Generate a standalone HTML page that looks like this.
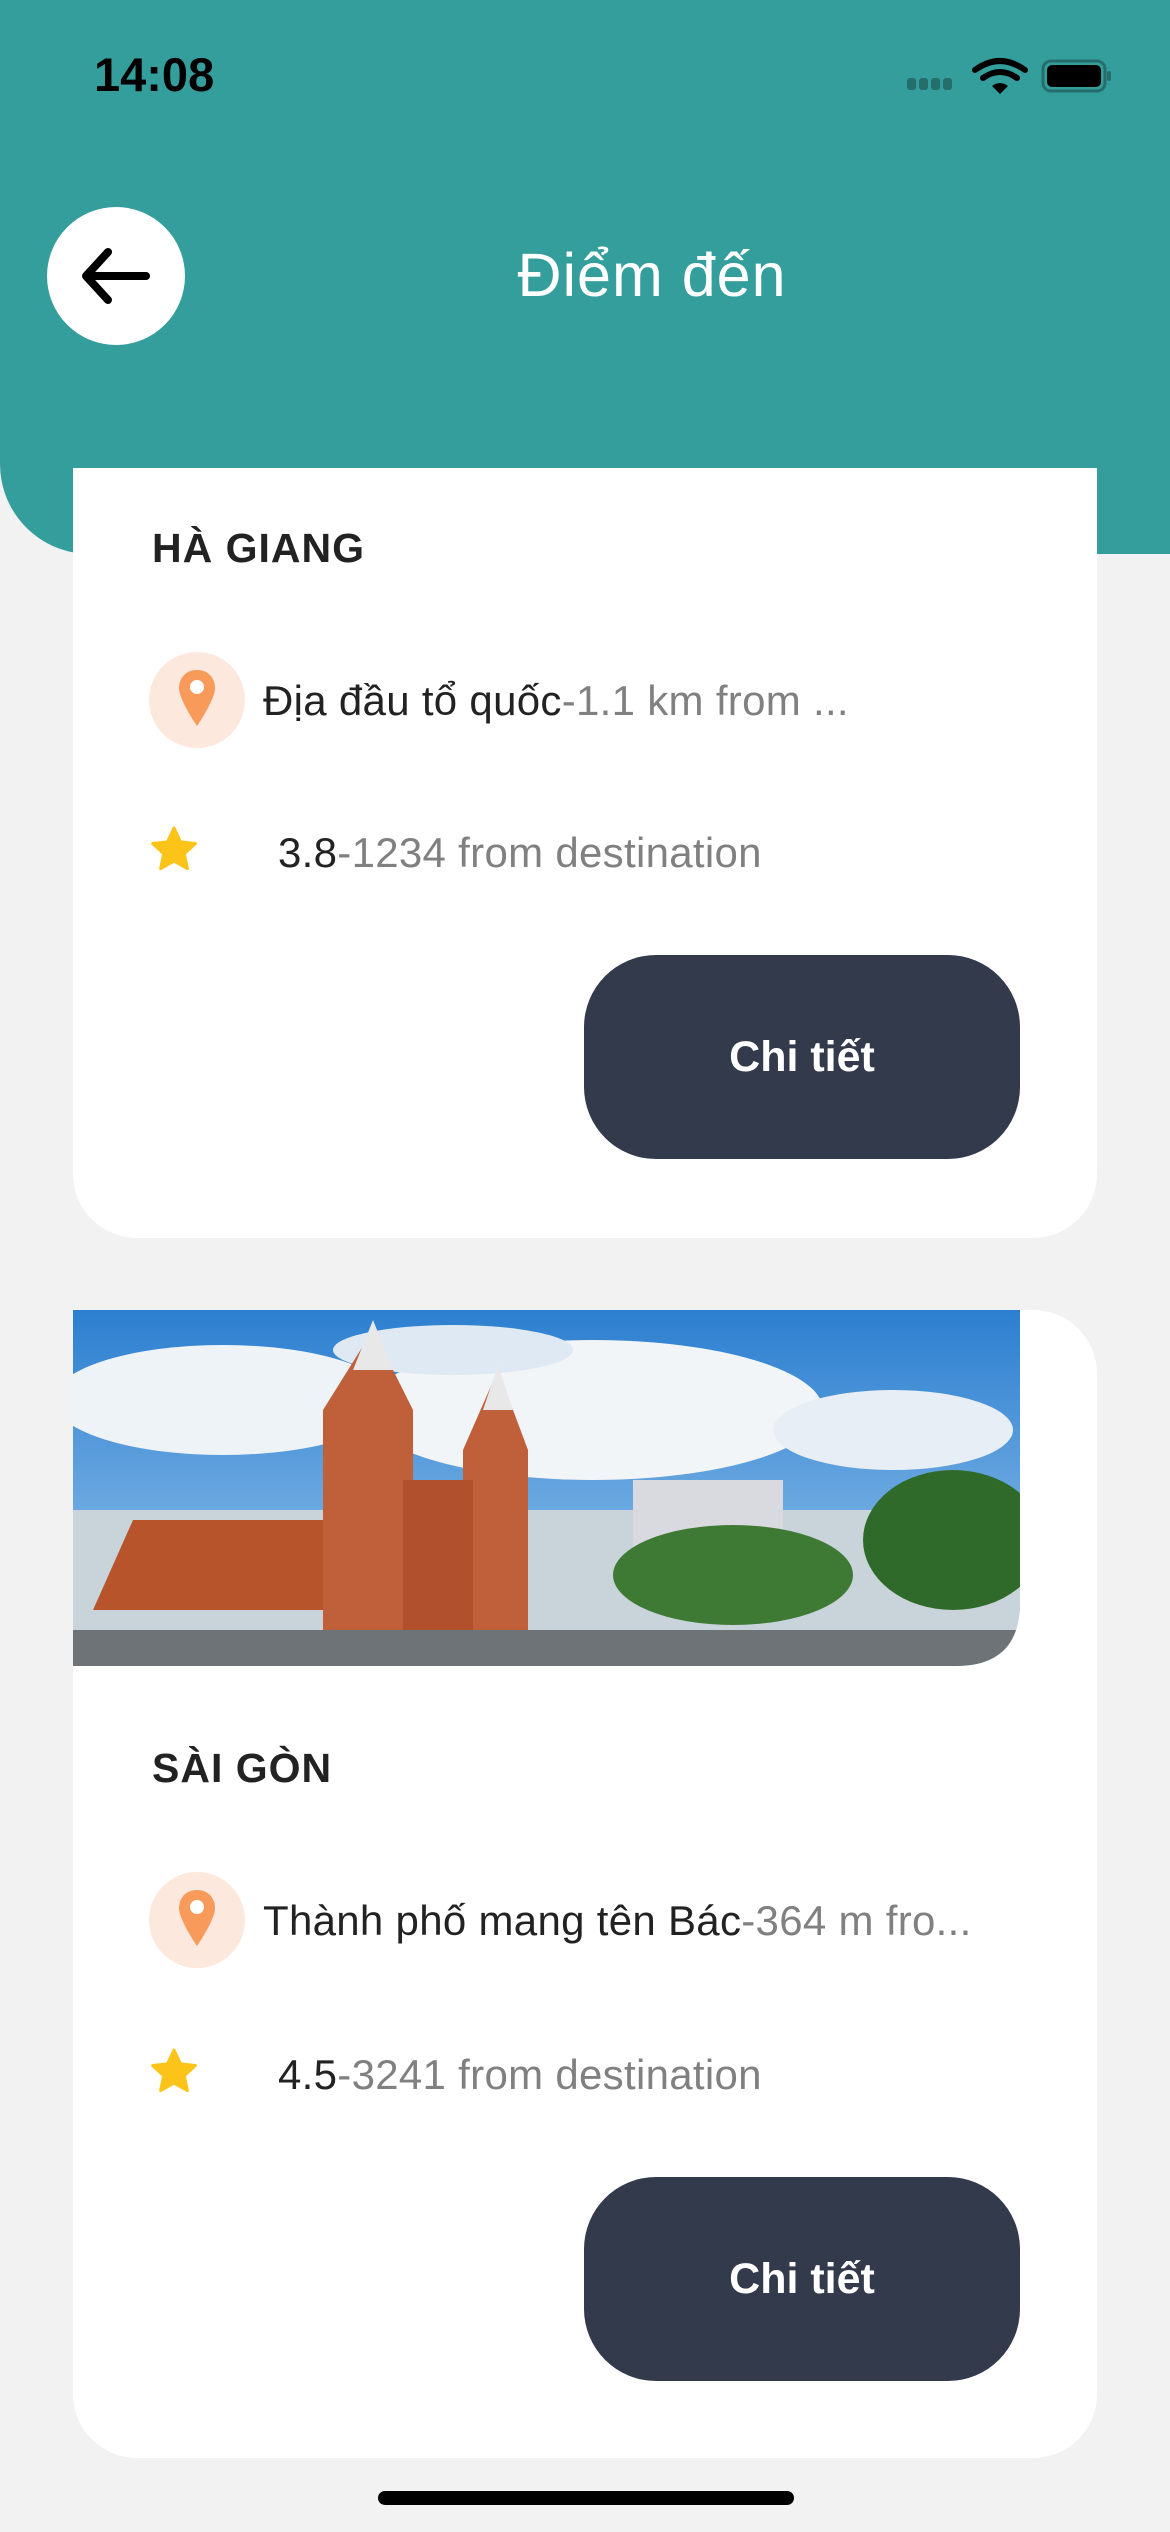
<!DOCTYPE html>
<html><head><meta charset="utf-8"><style>
*{margin:0;padding:0;box-sizing:border-box}
body{width:1170px;height:2532px;background:#f2f2f2;position:relative;overflow:hidden;font-family:"Liberation Sans","DejaVu Sans",sans-serif}
.hdr{position:absolute;left:0;top:0;width:1170px;height:554px;background:#349e9c;border-bottom-left-radius:90px}
.time{position:absolute;left:94px;top:47px;font-size:47px;font-weight:bold;color:#000}
.back{position:absolute;left:47px;top:207px;width:138px;height:138px;border-radius:50%;background:#fff}
.title{position:absolute;left:0;width:1304px;text-align:center;top:240px;font-size:61px;letter-spacing:1px;color:#fff;font-weight:500}
.card{position:absolute;left:73px;width:1024px;background:#fff}
.name{position:absolute;left:79px;font-size:41px;font-weight:bold;color:#222;letter-spacing:1px}
.pin{position:absolute;left:76px;width:96px;height:96px;border-radius:50%;background:#fde8dd}
.row{position:absolute;font-size:42px;color:#222;white-space:nowrap;letter-spacing:0.3px}
.row span{color:#808080}
.star{position:absolute;left:76px}
.btn{position:absolute;left:511px;width:436px;height:204px;border-radius:72px;background:#323a4b;color:#fff;font-size:43px;font-weight:bold;text-align:center;line-height:204px}
.home{position:absolute;left:378px;top:2491px;width:416px;height:14px;border-radius:7px;background:#000}
</style></head><body>
<div class="hdr"></div>
<div class="time">14:08</div>
<svg style="position:absolute;left:905px;top:56px" width="210" height="40" viewBox="0 0 210 40">
<g fill="#256e6c"><rect x="2" y="22" width="9" height="12" rx="3"/><rect x="14" y="22" width="9" height="12" rx="3"/><rect x="26" y="22" width="9" height="12" rx="3"/><rect x="38" y="22" width="9" height="12" rx="3"/></g>
<path d="M70 14 Q95 -4 120 14" stroke="#000" stroke-width="6" fill="none" stroke-linecap="round"/>
<path d="M78 22 Q95 10 112 22" stroke="#000" stroke-width="6" fill="none" stroke-linecap="round"/>
<path d="M87 30 L95 38 L103 30 Q95 24 87 30Z" fill="#000"/>
<rect x="138" y="5" width="62" height="30" rx="8" fill="none" stroke="#256e6c" stroke-width="3"/>
<rect x="142" y="9" width="54" height="22" rx="5" fill="#000"/>
<rect x="202" y="15" width="4" height="10" rx="2" fill="#256e6c"/>
</svg>
<div class="back"></div>
<svg style="position:absolute;left:80px;top:240px" width="72" height="72" viewBox="0 0 72 72">
<path d="M66 36 H8 M28 12 L6 36 L28 60" stroke="#000" stroke-width="8" fill="none" stroke-linecap="round" stroke-linejoin="round"/>
</svg>
<div class="title">Điểm đến</div>

<div class="card" style="top:468px;height:770px;border-radius:0 0 64px 64px">
<div class="name" style="top:57px">HÀ GIANG</div>
<div class="pin" style="top:184px"></div>
<svg style="position:absolute;left:104px;top:200px" width="40" height="64" viewBox="0 0 40 64"><path d="M20 2 C8 2 2 11 2 20 C2 32 20 58 20 58 C20 58 38 32 38 20 C38 11 32 2 20 2Z" fill="#f79a5a"/><circle cx="20" cy="19" r="7" fill="#fff"/></svg>
<div class="row" style="left:190px;top:209px">Địa đầu tổ quốc<span>-1.1 km from ...</span></div>
<svg class="star" style="top:358px" width="50" height="48" viewBox="0 0 24 23"><path d="M12 1l3.1 6.6 7.1.8-5.3 4.9 1.5 7.1L12 16.8l-6.4 3.6 1.5-7.1L1.8 8.4l7.1-.8z" fill="#fcc419" stroke="#fcc419" stroke-width="1.5" stroke-linejoin="round"/></svg>
<div class="row" style="left:205px;top:361px">3.8<span>-1234 from destination</span></div>
<div class="btn" style="top:487px">Chi tiết</div>
</div>

<div class="card" style="top:1310px;height:1148px;border-radius:0 64px 64px 64px">
<svg style="position:absolute;left:0;top:0" width="947" height="356" viewBox="0 0 947 356">
<defs><linearGradient id="sk" x1="0" y1="0" x2="0" y2="1"><stop offset="0" stop-color="#2c7fd0"/><stop offset="1" stop-color="#9cc8ee"/></linearGradient>
<clipPath id="cp"><path d="M0 0H947V292Q947 356 883 356H0Z"/></clipPath></defs>
<g clip-path="url(#cp)">
<rect width="947" height="356" fill="url(#sk)"/>
<ellipse cx="150" cy="90" rx="170" ry="55" fill="#eef3f8"/>
<ellipse cx="520" cy="100" rx="230" ry="70" fill="#f2f5f8"/>
<ellipse cx="820" cy="120" rx="120" ry="40" fill="#e8eef5"/>
<ellipse cx="380" cy="40" rx="120" ry="25" fill="#dfe9f3"/>
<rect x="0" y="200" width="947" height="130" fill="#c9d4da"/>
<path d="M20 300 L60 210 H280 V300Z" fill="#b8542c"/>
<path d="M250 100 L300 20 L340 100 V320 H250Z" fill="#c0603a"/>
<path d="M390 140 L425 60 L455 140 V320 H390Z" fill="#c0603a"/>
<rect x="330" y="170" width="70" height="150" fill="#b0502c"/>
<path d="M280 60 L300 10 L320 60Z M410 100 L425 55 L440 100Z" fill="#e8e8e8"/>
<rect x="560" y="170" width="150" height="120" fill="#d8dadf"/>
<ellipse cx="660" cy="265" rx="120" ry="50" fill="#3f7a35"/>
<ellipse cx="880" cy="230" rx="90" ry="70" fill="#2f6a2a"/>
<rect x="0" y="320" width="947" height="36" fill="#6e7377"/>
</g></svg>
<div class="name" style="top:435px">SÀI GÒN</div>
<div class="pin" style="top:562px"></div>
<svg style="position:absolute;left:104px;top:578px" width="40" height="64" viewBox="0 0 40 64"><path d="M20 2 C8 2 2 11 2 20 C2 32 20 58 20 58 C20 58 38 32 38 20 C38 11 32 2 20 2Z" fill="#f79a5a"/><circle cx="20" cy="19" r="7" fill="#fff"/></svg>
<div class="row" style="left:190px;top:587px">Thành phố mang tên Bác<span>-364 m fro...</span></div>
<svg class="star" style="top:738px" width="50" height="48" viewBox="0 0 24 23"><path d="M12 1l3.1 6.6 7.1.8-5.3 4.9 1.5 7.1L12 16.8l-6.4 3.6 1.5-7.1L1.8 8.4l7.1-.8z" fill="#fcc419" stroke="#fcc419" stroke-width="1.5" stroke-linejoin="round"/></svg>
<div class="row" style="left:205px;top:741px">4.5<span>-3241 from destination</span></div>
<div class="btn" style="top:867px">Chi tiết</div>
</div>
<div class="home"></div>
</body></html>
